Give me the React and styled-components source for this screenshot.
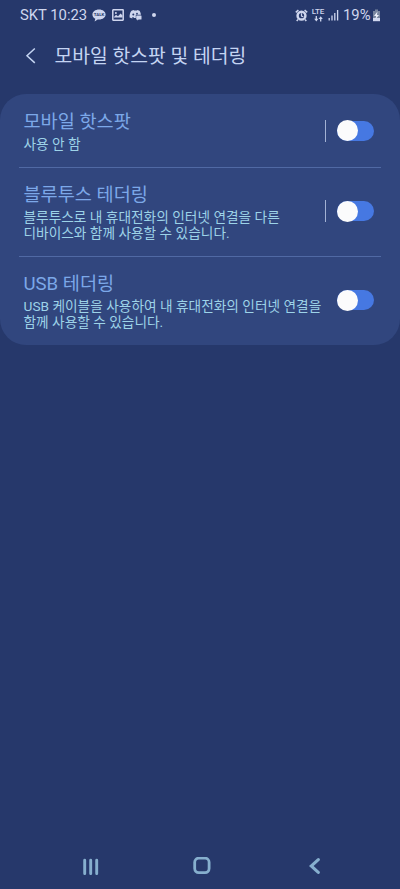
import styled, { createGlobalStyle } from 'styled-components'

const items = [
  { title: '모바일 핫스팟', lines: ['사용 안 함'], divided: true, height: 73, top: 15 },
  {
    title: '블루투스 테더링',
    lines: ['블루투스로 내 휴대전화의 인터넷 연결을 다른', '디바이스와 함께 사용할 수 있습니다.'],
    divided: true,
    height: 89,
    top: 14,
  },
  {
    title: 'USB 테더링',
    lines: ['USB 케이블을 사용하여 내 휴대전화의 인터넷 연결을', '함께 사용할 수 있습니다.'],
    divided: false,
    height: 89,
    top: 14,
  },
]

const TalkIcon = () => (
  <svg width="14" height="13" viewBox="0 0 14 13">
    <path d="M7 .6C3.200.6.4 2.800.4 5.600c0 1.800 1.100 3.300 2.900 4.200l-.7 2.800 3.100-2.100 1.300.1c3.800 0 6.600-2.200 6.600-5S10.800.6 7 .6Z" fill="#cfd6ee" />
    <text x="7" y="7.200" textAnchor="middle" fontSize="4.400" fontWeight="700" fontFamily="Roboto, sans-serif" fill="#26386b">
      TALK
    </text>
  </svg>
)

const PictureIcon = () => (
  <svg width="12" height="12" viewBox="0 0 12 12">
    <rect x=".8" y=".8" width="10.400" height="10.400" rx=".4" fill="none" stroke="#cfd6ee" strokeWidth="1.500" />
    <circle cx="3.900" cy="3.900" r="1" fill="#cfd6ee" />
    <path d="M2 8 4 5.800 6 7.200 8.600 4.500 10.500 6.500V8.500h-8.500Z" fill="#cfd6ee" />
  </svg>
)

const DiscordIcon = () => (
  <svg width="13" height="12" viewBox="0 0 13 12">
    <path d="M2.500 1.700 4.500 1.100l.6.500h2.800l.6-.5 2 .6c.9 1.300 1.300 2.500 1.400 4.100H6.800v3.200H4.600V8.100H3.400v1.400L.6 8.600C.4 5.500 1.100 3.300 2.500 1.700Z" fill="#cfd6ee" />
    <circle cx="4.300" cy="5.500" r="1" fill="#26386b" />
    <circle cx="8" cy="4.700" r=".9" fill="#26386b" />
    <rect x="7.200" y="6.600" width="5.300" height="3.900" rx=".5" fill="#cfd6ee" />
    <path d="M8 10.300h2l-2 1.300Z" fill="#cfd6ee" />
  </svg>
)

const AlarmIcon = () => (
  <svg width="13" height="13" viewBox="0 0 13 13">
    <circle cx="6.500" cy="6.700" r="3.900" fill="none" stroke="#cfd6ee" strokeWidth="2.500" />
    <path d="M6.500 4.300V7l1.800.8" fill="none" stroke="#cfd6ee" strokeWidth="1.200" />
    <path d="M.8 3.400 3.400 1M12.200 3.400 9.600 1M3 10.500l-1.300 1.500M10 10.500l1.300 1.500" stroke="#cfd6ee" strokeWidth="1.500" />
  </svg>
)

const DataArrows = () => (
  <svg width="9" height="6" viewBox="0 0 9 6">
    <path d="M2.300 0v3.600M6.700 5.500V2" fill="none" stroke="#cfd6ee" strokeWidth="1.300" />
    <path d="M.2 2.700h4.200L2.300 5.400ZM4.600 2.900h4.200L6.700.2Z" fill="#cfd6ee" />
  </svg>
)

const SignalIcon = () => (
  <svg width="11" height="12" viewBox="0 0 11 12">
    <path d="M1.200 9v2.500M4 6.500v5M6.800 4v7.500M9.600 1v10.500" stroke="#cfd6ee" strokeWidth="1.300" />
  </svg>
)

const BatteryIcon = () => (
  <svg width="9" height="13" viewBox="0 0 9 13">
    <path d="M3 .5h3V2h2v7H1V2h2Z" fill="#78859f" />
    <path d="M1 9h7v3.200H1Z" fill="#cfd6ee" />
    <path d="M5.500 2.500 2 7h2.100l-.7 3.200L7 5.900H4.900Z" fill="#edf1fb" />
  </svg>
)

const App = () => {
  return (
    <Screen>
      <GlobalStyle />
      <StatusBar>
        <Clock>SKT 10:23</Clock>
        <Notifications>
          <TalkIcon />
          <PictureIcon />
          <DiscordIcon />
          <Dot />
        </Notifications>
        <Indicators>
          <AlarmIcon />
          <Network>
            <span>LTE</span>
            <DataArrows />
          </Network>
          <SignalIcon />
          <Percent>19%</Percent>
          <BatteryIcon />
        </Indicators>
      </StatusBar>
      <Header>
        <svg width="11" height="18" viewBox="0 0 11 18">
          <path d="M9.800 1.500 2 8.700l7.800 7.200" fill="none" stroke="#c4d4f2" strokeWidth="1.500" />
        </svg>
        <h1>모바일 핫스팟 및 테더링</h1>
      </Header>
      <Card>
        {items.map((item) => (
          <Row key={item.title} $height={item.height}>
            <Info $top={item.top}>
              <h2>{item.title}</h2>
              {item.lines.map((line) => (
                <p key={line}>{line}</p>
              ))}
            </Info>
            <Control>
              {item.divided && <Divider />}
              <Switch role="switch" aria-checked="false">
                <Knob />
              </Switch>
            </Control>
          </Row>
        ))}
      </Card>
      <NavBar>
        <svg width="17" height="18" viewBox="0 0 17 18">
          <path d="M1.700 3.200v13.400M7.700 3.200v13.400M13.700 3.200v13.400" stroke="#86afce" strokeWidth="2.900" strokeLinecap="round" />
        </svg>
        <svg width="18" height="18" viewBox="0 0 18 18">
          <rect x="1.700" y="1.200" width="14.400" height="14.400" rx="4" fill="none" stroke="#86afce" strokeWidth="2.800" />
        </svg>
        <svg width="12" height="18" viewBox="0 0 12 18">
          <path d="M9.300 2.600 2.200 9l7.100 6.400" fill="none" stroke="#86afce" strokeWidth="3.100" strokeLinecap="round" />
        </svg>
      </NavBar>
    </Screen>
  )
}

export default App

const GlobalStyle = createGlobalStyle`
  * {
    box-sizing: border-box;
  }

  body {
    margin: 0;
    background: #26386b;
    font-family: Roboto, 'Noto Sans CJK KR', sans-serif;
  }

  h1, h2, p {
    margin: 0;
    font-weight: 400;
    white-space: nowrap;
  }

  svg {
    display: block;
    flex-shrink: 0;
  }
`

const Screen = styled.div`
  display: flex;
  flex-direction: column;
  height: 100vh;
  overflow: hidden;
  background: #26386b;
`

const StatusBar = styled.div`
  display: flex;
  align-items: center;
  height: 30px;
  padding: 0 19.5px 0 20px;
  color: #cfd6ee;
`

const Clock = styled.span`
  width: 72px;
  font-size: 14.8px;
  white-space: nowrap;
`

const Notifications = styled.div`
  display: flex;
  align-items: center;
  gap: 5.5px;
`

const Dot = styled.span`
  width: 4px;
  height: 4px;
  margin-left: 4px;
  border-radius: 50%;
  background: #cfd6ee;
`

const Indicators = styled.div`
  display: flex;
  align-items: center;
  margin-left: auto;
`

const Network = styled.div`
  display: flex;
  flex-direction: column;
  align-items: center;
  width: 13px;
  margin: 0 3px 0 4px;
  font-size: 8px;
  font-weight: 500;
  line-height: 8px;
`

const Percent = styled.span`
  margin: 0 1px 0 4.5px;
  font-size: 14.8px;
`

const Header = styled.header`
  display: flex;
  align-items: center;
  height: 64px;
  padding: 0 0 12px 25px;
  color: #c4d4f2;

  h1 {
    margin: 2px 0 0 18.5px;
    font-size: 19.3px;
    line-height: 28px;
  }
`

const Card = styled.main`
  height: 251px;
  border-radius: 26px;
  background: #31467e;
`

const Row = styled.section`
  display: flex;
  justify-content: space-between;
  height: ${(props) => props.$height}px;
  margin: 0 19px;
  padding: 0 7px 0 4.5px;

  & + & {
    border-top: 1px solid #5069a4;
  }
`

const Info = styled.div`
  padding-top: ${(props) => props.$top}px;

  h2 {
    color: #7ca8e8;
    font-size: 18.6px;
    line-height: 27px;
  }

  p {
    color: #9dd3e8;
    font-size: 13.7px;
    line-height: 16px;
  }
`

const Control = styled.div`
  display: flex;
  align-items: center;
  gap: 11px;
  height: 100%;

  ${Row} + ${Row} & {
    padding-bottom: 1.5px;
  }
`

const Divider = styled.span`
  width: 1px;
  height: 22px;
  background: #a3b2d4;
`

const Switch = styled.span`
  display: flex;
  align-items: center;
  width: 37px;
  height: 20px;
  border-radius: 10px;
  background: #4678e2;
`

const Knob = styled.span`
  display: block;
  width: 21px;
  height: 21px;
  border-radius: 50%;
  background: #fbfbfc;
`

const NavBar = styled.nav`
  display: flex;
  align-items: center;
  justify-content: space-between;
  height: 46px;
  margin-top: auto;
  padding: 0 79px 0 83px;

  svg:first-child {
    margin-right: -6px;
  }
`
